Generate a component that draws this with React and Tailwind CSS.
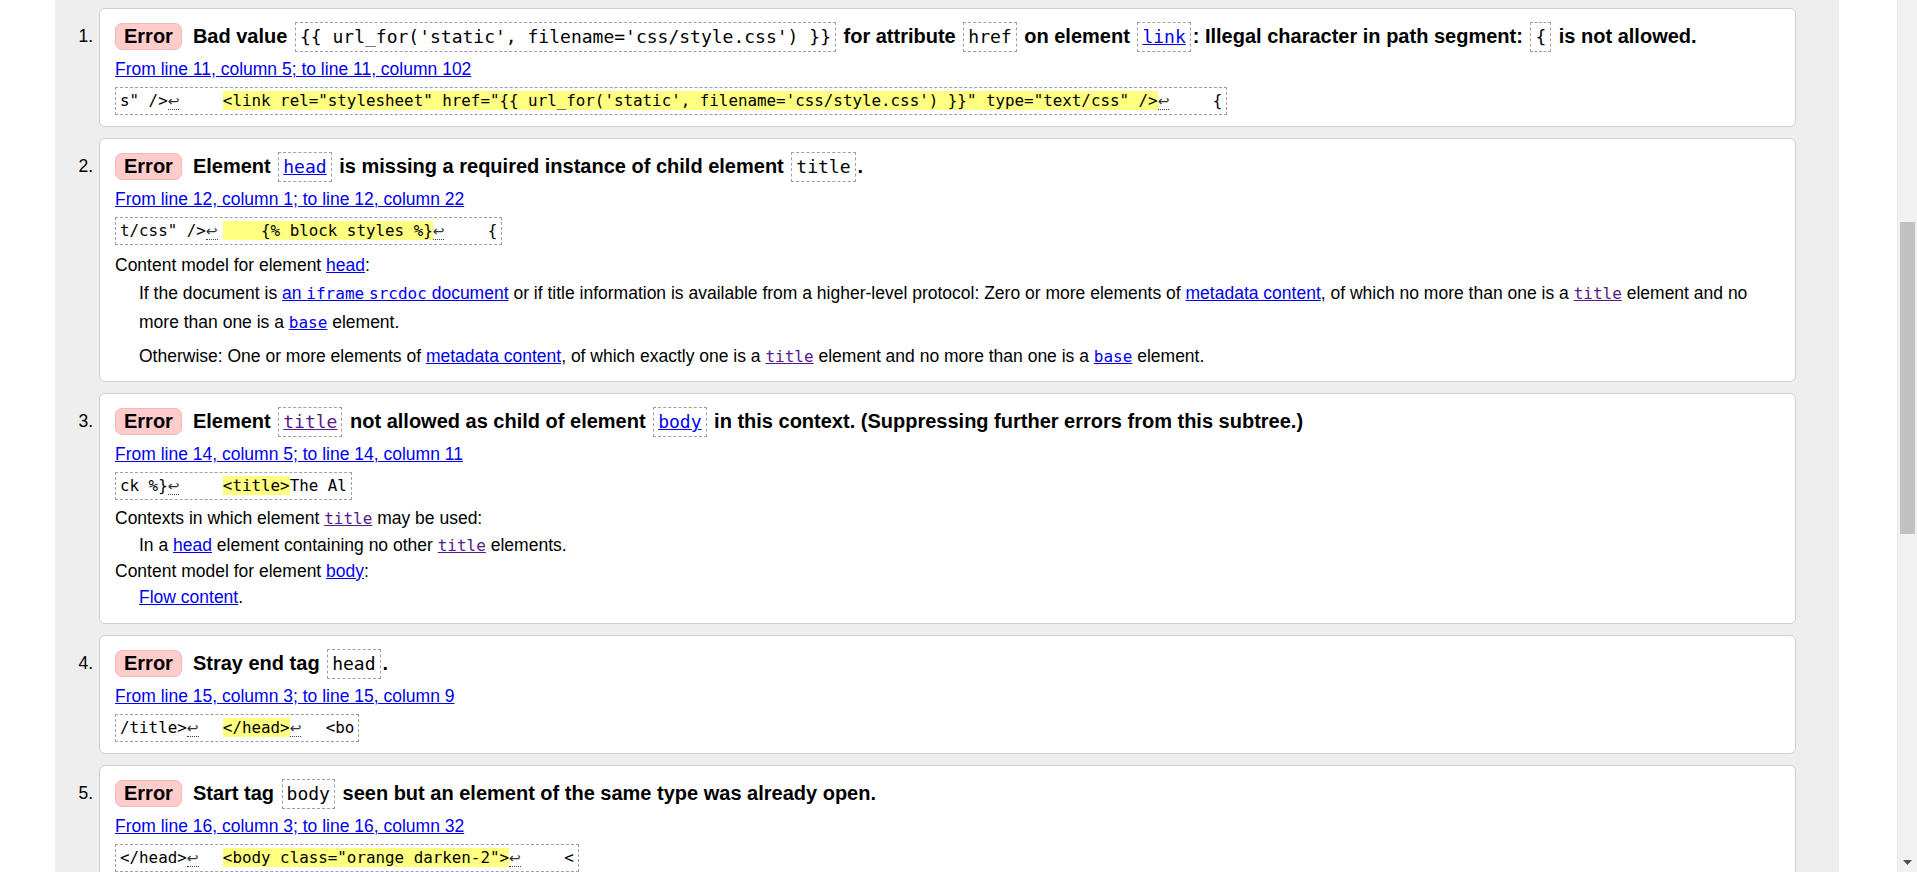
import React from 'react';

const sans = "font-['Liberation_Sans',Arial,sans-serif]";

// dashed code box used inside the message heading
function Code({ children, link, visited }) {
  return (
    <code className="mx-[2px] inline-block border border-dashed border-[#a0a0a0] px-[4px] font-['DejaVu_Sans_Mono',monospace] text-[18px] font-normal leading-[28px] text-black">
      {link ? (
        <span className={visited ? 'text-[#551a8b] underline' : 'text-[#0000ee] underline'}>{children}</span>
      ) : (
        children
      )}
    </code>
  );
}

// inline code in the explanation text
function Ic({ children, visited, link = true }) {
  return (
    <code
      className={`font-['DejaVu_Sans_Mono',monospace] text-[16px] leading-none ${
        link ? (visited ? 'text-[#551a8b] underline' : 'text-[#0000ee] underline') : ''
      }`}
    >
      {children}
    </code>
  );
}

function A({ children }) {
  return <span className="text-[#0000ee] underline">{children}</span>;
}

// line-feed marker in the source extract
function Lf() {
  return (
    <span className="inline-block w-[17px]">
      <span className="border-b border-dotted border-[#444] font-['DejaVu_Sans',sans-serif] text-[14px] text-[#333]">↩</span>
    </span>
  );
}

function Mark({ children }) {
  return <mark className="bg-[#ffff80] text-black">{children}</mark>;
}

function Extract({ children }) {
  return (
    <div className="mt-[4px]">
      <code className="inline-block whitespace-pre border border-dashed border-[#a0a0a0] px-[4px] font-['DejaVu_Sans_Mono',monospace] text-[15.85px] leading-[26px] text-black">
        {children}
      </code>
    </div>
  );
}

function Message({ n, heading, location, extract, children, pb = 'pb-[11px]' }) {
  return (
    <li className="flex">
      <div className="w-[44px] shrink-0 pr-[6px] pt-[9px] text-right text-[17.5px] leading-[38px] text-black">{n}.</div>
      <div className={`flex-1 rounded-[6px] border border-[#cfcfcf] bg-white pl-[15px] pr-4 pt-[8px] ${pb}`}>
        <p className="text-[20px] font-bold leading-[38px] text-black">
          <span className="mr-[11px] inline-block rounded-[7px] border border-[#f2b8b8] bg-[#ffcccc] px-[8px] leading-[25px]">Error</span>
          {heading}
        </p>
        <p className="text-[17.5px] leading-[28px]">
          <A>{location}</A>
        </p>
        <Extract>{extract}</Extract>
        {children}
      </div>
    </li>
  );
}

export default function App() {
  return (
    <div className={`flex h-[872px] w-full overflow-hidden bg-white ${sans}`}>
      <div className="w-[55px] shrink-0" />
      <div className="w-[1784px] shrink-0 bg-[#eeeeee] pr-[43px] pt-[8px]">
        <ol className="flex flex-col gap-[11px]">
          <Message
            n={1}
            heading={
              <>
                Bad value <Code>{"{{ url_for('static', filename='css/style.css') }}"}</Code> for attribute <Code>href</Code> on
                element <Code link>link</Code>: Illegal character in path segment: <Code>{'{'}</Code> is not allowed.
              </>
            }
            location="From line 11, column 5; to line 11, column 102"
            extract={
              <>
                {'s" />'}
                <Lf />
                {'    '}
                <Mark>{`<link rel="stylesheet" href="{{ url_for('static', filename='css/style.css') }}" type="text/css" />`}</Mark>
                <Lf />
                {'    {'}
              </>
            }
          />

          <Message
            n={2}
            pb="pb-[10px]"
            heading={
              <>
                Element <Code link>head</Code> is missing a required instance of child element <Code>title</Code>.
              </>
            }
            location="From line 12, column 1; to line 12, column 22"
            extract={
              <>
                {'t/css" />'}
                <Lf />
                <Mark>{'    {% block styles %}'}</Mark>
                <Lf />
                {'    {'}
              </>
            }
          >
            <p className="mt-[6px] text-[17.5px] leading-[28px] text-black">
              Content model for element <A>head</A>:
            </p>
            <p className="pl-[24px] text-[17.5px] leading-[29px] text-black">
              If the document is{' '}
              <A>
                an <Ic link={false}>iframe</Ic> <Ic link={false}>srcdoc</Ic> document
              </A>{' '}
              or if title information is available from a higher-level protocol: Zero or more elements of{' '}
              <A>metadata content</A>, of which no more than one is a <Ic visited>title</Ic> element and no
              <br />
              more than one is a <Ic>base</Ic> element.
            </p>
            <p className="mt-[4px] pl-[24px] text-[17.5px] leading-[30px] text-black">
              Otherwise: One or more elements of <A>metadata content</A>, of which exactly one is a <Ic visited>title</Ic>{' '}
              element and no more than one is a <Ic>base</Ic> element.
            </p>
          </Message>

          <Message
            n={3}
            pb="pb-[12px]"
            heading={
              <>
                Element <Code link visited>title</Code> not allowed as child of element <Code link>body</Code> in this context.
                (Suppressing further errors from this subtree.)
              </>
            }
            location="From line 14, column 5; to line 14, column 11"
            extract={
              <>
                {'ck %}'}
                <Lf />
                {'    '}
                <Mark>{'<title>'}</Mark>
                {'The Al'}
              </>
            }
          >
            <p className="mt-[4px] text-[17.5px] leading-[28px] text-black">
              Contexts in which element <Ic visited>title</Ic> may be used:
            </p>
            <p className="pl-[24px] text-[17.5px] leading-[27px] text-black">
              In a <A>head</A> element containing no other <Ic visited>title</Ic> elements.
            </p>
            <p className="text-[17.5px] leading-[25px] text-black">
              Content model for element <A>body</A>:
            </p>
            <p className="pl-[24px] text-[17.5px] leading-[27px] text-black">
              <A>Flow content</A>.
            </p>
          </Message>

          <Message
            n={4}
            heading={
              <>
                Stray end tag <Code>head</Code>.
              </>
            }
            location="From line 15, column 3; to line 15, column 9"
            extract={
              <>
                {'/title>'}
                <Lf />
                {'  '}
                <Mark>{'</head>'}</Mark>
                <Lf />
                {'  <bo'}
              </>
            }
          />

          <Message
            n={5}
            heading={
              <>
                Start tag <Code>body</Code> seen but an element of the same type was already open.
              </>
            }
            location="From line 16, column 3; to line 16, column 32"
            extract={
              <>
                {'</head>'}
                <Lf />
                {'  '}
                <Mark>{'<body class="orange darken-2">'}</Mark>
                <Lf />
                {'    <'}
              </>
            }
          />
        </ol>
      </div>
      <div className="w-[58px] shrink-0" />
      {/* fake window scrollbar */}
      <div className="flex w-[20px] shrink-0 flex-col border-l border-[#e8e8e8] bg-[#f1f1f1]">
        <div className="h-[222px]" />
        <div className="mx-[2px] h-[312px] bg-[#c1c1c1]" />
        <div className="flex-1" />
        <div className="flex h-[12px] items-start justify-center">
          <svg width="9" height="5" viewBox="0 0 9 5"><path d="M0 0 L9 0 L4.5 5 Z" fill="#505050" /></svg>
        </div>
      </div>
    </div>
  );
}
